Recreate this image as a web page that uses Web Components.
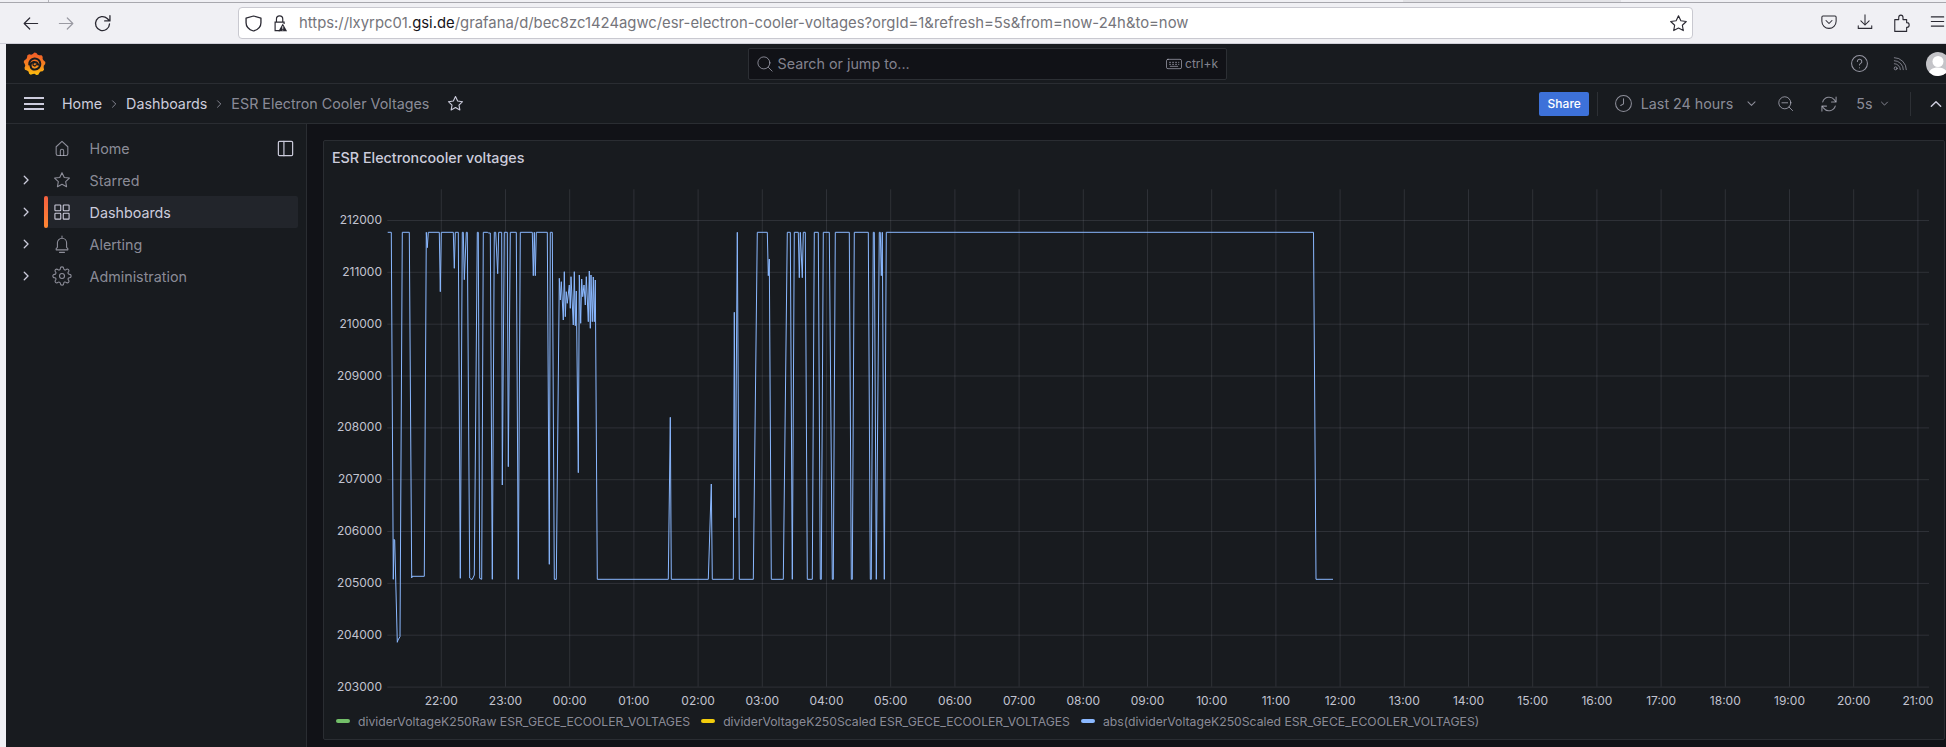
<!DOCTYPE html>
<html>
<head>
<meta charset="utf-8">
<title>ESR Electron Cooler Voltages</title>
<style>
  html, body { margin: 0; height: 100%; overflow: hidden; background: #f0f0f4; }
  body { display: flex; flex-direction: column; width: 1946px; height: 747px; font-family: "Inter", "Liberation Sans", sans-serif; }
</style>
</head>
<body>
<ff-toolbar url-host="lxyrpc01.gsi.de" url-pre="https://" url-post="/grafana/d/bec8zc1424agwc/esr-electron-cooler-voltages?orgId=1&amp;refresh=5s&amp;from=now-24h&amp;to=now"></ff-toolbar>
<gf-app>
  <gf-topbar></gf-topbar>
  <gf-crumbs title-text="ESR Electron Cooler Voltages"></gf-crumbs>
  <gf-body>
    <gf-sidebar slot="side">
      <gf-nav-item icon="home" dock>Home</gf-nav-item>
      <gf-nav-item icon="star" expandable>Starred</gf-nav-item>
      <gf-nav-item icon="apps" expandable active>Dashboards</gf-nav-item>
      <gf-nav-item icon="bell" expandable>Alerting</gf-nav-item>
      <gf-nav-item icon="cog" expandable>Administration</gf-nav-item>
    </gf-sidebar>
    <gf-panel title-text="ESR Electroncooler voltages">
      <gf-chart></gf-chart>
      <gf-legend slot="legend">
        <gf-legend-item color="#73bf69">dividerVoltageK250Raw ESR_GECE_ECOOLER_VOLTAGES</gf-legend-item>
        <gf-legend-item color="#f2cc0c">dividerVoltageK250Scaled ESR_GECE_ECOOLER_VOLTAGES</gf-legend-item>
        <gf-legend-item color="#8ab8ff">abs(dividerVoltageK250Scaled ESR_GECE_ECOOLER_VOLTAGES)</gf-legend-item>
      </gf-legend>
    </gf-panel>
  </gf-body>
</gf-app>

<script>
"use strict";

(() => {
  const ICONS = {
    back: `<path d="M21 12H4M11 5l-7 7 7 7"/>`,
    forward: `<path d="M3 12h17M13 5l7 7-7 7"/>`,
    reload: `<path d="M20 12.500a8 8 0 1 1-2.600-6.300L20 8.800M20.500 3v6h-6"/>`,
    shield: `<path d="M12 2.500l8.500 2.700V11c0 5.200-3.500 8.800-8.500 10.500C7 19.800 3.500 16.200 3.500 11V5.200z"/>`,
    pocket: `<path d="M4 4h16a1.500 1.500 0 0 1 1.500 1.500V11a9.500 9.500 0 0 1-19 0V5.500A1.500 1.500 0 0 1 4 4z"/><path d="M8 10l4 4 4-4"/>`,
    download: `<path d="M12 2.500V16M6.500 10.500L12 16l5.500-5.500M3 17v3.500h18V17"/>`,
    puzzle: `<path d="M4 8h5V5.500a2.700 2.700 0 0 1 5.400 0V8H19v3.500h.5a2.700 2.700 0 0 1 0 5.400H19V21.500H4z" transform="translate(-.5 -.5)"/>`,
    menu: `<path d="M2 5.500h20M2 12h20M2 18.500h20"/>`,
    home: `<path d="M5 10.500L12 4l7 6.500V19a2 2 0 0 1-2 2H7a2 2 0 0 1-2-2z"/><path d="M10 21v-5.500a2 2 0 0 1 4 0V21"/>`,
    star: `<path d="M12 3.200l2.700 5.700 6.200.8-4.500 4.300 1.100 6.100-5.500-3-5.500 3 1.100-6.100-4.500-4.300 6.200-.8z"/>`,
    apps: `<rect x="3.500" y="3.500" width="7" height="7" rx=".8"/><rect x="13.500" y="3.500" width="7" height="7" rx=".8"/><rect x="3.500" y="13.500" width="7" height="7" rx=".8"/><rect x="13.500" y="13.500" width="7" height="7" rx=".8"/>`,
    bell: `<path d="M12 2.500v2M6.500 16v-5.500a5.500 5.500 0 0 1 11 0V16l1.500 1.500v1.500H5v-1.500z"/><path d="M9 22h6"/>`,
    cog: `<circle cx="12" cy="12" r="3"/><path d="M19.400 15a1.650 1.650 0 0 0 .33 1.820l.06.06a2 2 0 0 1 0 2.830 2 2 0 0 1-2.830 0l-.06-.06a1.650 1.650 0 0 0-1.820-.33 1.650 1.650 0 0 0-1 1.510V21a2 2 0 0 1-2 2 2 2 0 0 1-2-2v-.09A1.650 1.650 0 0 0 9 19.400a1.650 1.650 0 0 0-1.820.33l-.06.06a2 2 0 0 1-2.830 0 2 2 0 0 1 0-2.830l.06-.06a1.650 1.650 0 0 0 .33-1.820 1.650 1.650 0 0 0-1.510-1H3a2 2 0 0 1-2-2 2 2 0 0 1 2-2h.09A1.650 1.650 0 0 0 4.600 9a1.650 1.650 0 0 0-.33-1.820l-.06-.06a2 2 0 0 1 0-2.830 2 2 0 0 1 2.830 0l.06.06a1.650 1.650 0 0 0 1.820.33H9a1.650 1.650 0 0 0 1-1.510V3a2 2 0 0 1 2-2 2 2 0 0 1 2 2v.09a1.650 1.650 0 0 0 1 1.510 1.650 1.650 0 0 0 1.820-.33l.06-.06a2 2 0 0 1 2.830 0 2 2 0 0 1 0 2.830l-.06.06a1.650 1.650 0 0 0-.33 1.820V9a1.650 1.650 0 0 0 1.510 1H21a2 2 0 0 1 2 2 2 2 0 0 1-2 2h-.09a1.650 1.650 0 0 0-1.510 1z"/>`,
    dock: `<rect x="3" y="3" width="18" height="18" rx="1.500"/><path d="M10 3v18"/>`,
    search: `<circle cx="10.500" cy="10.500" r="8"/><path d="M16.500 16.500l5 5"/>`,
    keyboard: `<rect x="2" y="5" width="20" height="14" rx="2"/><path d="M6 9.500h1.500M10 9.500h1.500M14 9.500h1.500M18 9.500h.5M6 12.500h1.500M10 12.500h1.500M14 12.500h1.500M18 12.500h.5M7 15.500h10"/>`,
    help: `<circle cx="12" cy="12" r="10"/><path d="M9.300 9.500a2.800 2.800 0 1 1 4.200 2.400c-1 .6-1.500 1.100-1.500 2.100M12 17.300v.2"/>`,
    rss: `<circle cx="5.500" cy="18.500" r="2.200"/><path d="M3.500 11.500a9 9 0 0 1 9 9M3.500 7a13.500 13.500 0 0 1 13.500 13.500M3.500 2.500a18 18 0 0 1 18 18"/>`,
    clock: `<circle cx="12" cy="12" r="10"/><path d="M12 6v6.500l-3.500 2"/>`,
    zoomout: `<circle cx="11" cy="11" r="8.500"/><path d="M7 11h8M17 17l5 5"/>`,
    sync: `<path d="M4.500 9.500A8 8 0 0 1 18.500 7L20 9M19.500 14.500A8 8 0 0 1 5.500 17L4 15"/><path d="M20.500 3.500V9.500h-5.500M3.500 20.500V14.500h5.500"/>`,
    right: `<path d="M9 5.500l6.500 6.500L9 18.500"/>`,
    down: `<path d="M5.500 9l6.500 6.500L18.500 9"/>`,
    up: `<path d="M5 15.500L12 8.500l7 7"/>`
  };

  const icon = (name, w, sw = 1.7, h = w) =>
    `<svg width="${w}" height="${h}" viewBox="0 0 24 24" fill="none" stroke="currentColor" stroke-width="${sw}" stroke-linecap="round" stroke-linejoin="round" preserveAspectRatio="none" style="display:block;flex:none">${ICONS[name]}</svg>`;

  customElements.define("ff-toolbar", class extends HTMLElement {
    connectedCallback() {
      const pre = this.getAttribute("url-pre"), host = this.getAttribute("url-host"), post = this.getAttribute("url-post");
      this.attachShadow({mode: "open"}).innerHTML = `
      <style>
      :host {
        display: block;
        flex: none;
        height: 44px;
        background: #f0f0f4;
        color: #2b2a33;
        font-family: "Inter", "Liberation Sans", sans-serif;
      }
      #tabs {
        height: 2px;
        border-bottom: 1px solid #a8a8ae;
        background: linear-gradient(#b4b4ba, #b4b4ba) 48px 0 / 1px 100% no-repeat,
                    linear-gradient(#e2e2e6, #e2e2e6) 1403px 0 / 218px 100% no-repeat;
      }
      #row { display: flex; align-items: center; height: 40px; padding-left: 12px; border-bottom: 1px solid #cfcfd8; box-sizing: content-box; }
      .btn { width: 36px; display: flex; justify-content: center; flex: none; }
      .dim { color: #9a9aa2; }
      #url {
        margin-left: 118px;
        width: 1455px;
        height: 32px;
        flex: none;
        box-sizing: border-box;
        display: flex;
        align-items: center;
        padding: 0 3.500px 0 3.500px;
        background: #fff;
        border: 1px solid #c9c9d0;
        border-radius: 4px;
      }
      #lock { margin-left: 9.500px; width: 15px; height: 18px; flex: none; }
      #text { margin-left: 11px; font-size: 14.850px; color: #75757b; white-space: nowrap; flex: 1; }
      #text b { font-weight: 400; color: #15141a; }
      #right { margin-left: 118px; display: flex; }
      </style>
      <div id="tabs"></div>
      <div id="row">
        <span class="btn">${icon("back", 19, 1.500)}</span>
        <span class="btn dim">${icon("forward", 19, 1.500)}</span>
        <span class="btn">${icon("reload", 21, 1.500)}</span>
        <div id="url">
          ${icon("shield", 21, 1.500, 19)}
          <svg id="lock" viewBox="0 0 15 20" fill="none" stroke="#2b2a33" stroke-width="1.300">
            <path d="M3 9V5.500a3.500 3.500 0 0 1 7 0V9"/>
            <path d="M7 18.500H1.500V9h10v2"/>
            <path d="M10 10.500l4.800 8.800H5.200z" fill="#2b2a33" stroke="none"/>
            <path d="M10 13.500v3M10 17.500v.8" stroke="#fff" stroke-width="1"/>
          </svg>
          <span id="text">${pre}${host.replace("gsi.de", "<b>gsi.de</b>")}${post.replace(/&/g, "&amp;")}</span>
          ${icon("star", 21, 1.300)}
        </div>
        <div id="right">
          <span class="btn">${icon("pocket", 18, 1.400)}</span>
          <span class="btn">${icon("download", 18, 1.400)}</span>
          <span class="btn">${icon("puzzle", 19, 1.400, 21)}</span>
          <span class="btn">${icon("menu", 15, 1.500, 17)}</span>
        </div>
      </div>`;
    }
  });

  customElements.define("gf-app", class extends HTMLElement {
    constructor() {
      super();
      this.attachShadow({mode: "open"}).innerHTML = `
      <style>
      :host {
        display: flex;
        flex-direction: column;
        flex: none;
        margin-left: 6px;
        width: 1946px;
        height: 703px;
        background: #111217;
        color: #ccccdc;
        font-family: "Inter", "Liberation Sans", sans-serif;
        font-size: 14.300px;
      }
      </style>
      <slot></slot>`;
    }
  });

  customElements.define("gf-logo", class extends HTMLElement {
    constructor() {
      super();
      // bumpy gear outline, nine teeth around the swirl
      let d = "";
      for (let i = 0; i < 36; i++) {
        const a = (i / 36) * Math.PI * 2 - Math.PI / 2;
        const r = [12, 11.6, 10.2, 10.6][i % 4];
        d += (i ? "L" : "M") + (12 + r * 0.96 * Math.cos(a)).toFixed(2) + " " + (12 + r * Math.sin(a)).toFixed(2);
      }
      this.attachShadow({mode: "open"}).innerHTML = `
      <style>:host { display: block; width: 23px; height: 24px; flex: none; }</style>
      <svg width="23" height="24" viewBox="0 0 24 24" style="display:block">
        <defs><linearGradient id="g" x1="0" y1="0" x2="0" y2="1">
          <stop offset="0" stop-color="#f15a29"/><stop offset=".55" stop-color="#f58220"/><stop offset="1" stop-color="#fcc10d"/>
        </linearGradient></defs>
        <path d="${d}Z" fill="url(#g)"/>
        <path d="M6.500 12.500a5.800 5.800 0 1 1 6 5.300 4 4 0 1 1 3.300-5" fill="none" stroke="#181b1f" stroke-width="2.100" stroke-linecap="round"/>
        <path d="M12.500 10.500a1.800 1.800 0 1 0 1.400 2.200" fill="none" stroke="#181b1f" stroke-width="1.300" stroke-linecap="round"/>
      </svg>`;
    }
  });

  customElements.define("gf-topbar", class extends HTMLElement {
    constructor() {
      super();
      this.attachShadow({mode: "open"}).innerHTML = `
      <style>
      :host {
        display: grid;
        grid-template-columns: 742px 479px 1fr;
        align-items: center;
        flex: none;
        height: 39px;
        box-sizing: content-box;
        background: #181b1f;
        border-bottom: 1px solid #2a2d32;
      }
      #logo { padding-left: 17px; }
      #search {
        height: 32px;
        box-sizing: border-box;
        display: flex;
        align-items: center;
        padding: 0 8px 0 6.500px;
        background: #111217;
        border: 1px solid #2c2f34;
        border-radius: 2px;
        color: rgba(204,204,220,.62);
      }
      #search span { margin-left: 4px; flex: 1; }
      #search i { font-style: normal; font-size: 12px; margin-left: 2.500px; }
      #right { display: flex; align-items: center; justify-content: flex-end; padding-right: 2px; color: rgba(204,204,220,.7); }
      #avatar { margin-left: 18px; width: 24px; height: 24px; border-radius: 50%; overflow: hidden; background: #c4c4c8; }
      #rss { margin-left: 23px; color: rgba(204,204,220,.55); }
      </style>
      <div id="logo"><gf-logo></gf-logo></div>
      <div id="search">
        ${icon("search", 18, 1.300)}
        <span>Search or jump to...</span>
        ${icon("keyboard", 18, 1.300, 16)}
        <i>ctrl+k</i>
      </div>
      <div id="right">
        ${icon("help", 19, 1.300)}
        <div id="rss">${icon("rss", 16, 1.500)}</div>
        <div id="avatar">
          <svg width="24" height="24" viewBox="0 0 24 24" style="display:block"><circle cx="12" cy="9.500" r="5.500" fill="#fff"/><path d="M2 26c0-8 4-10.500 10-10.500S22 18 22 26z" fill="#fff"/></svg>
        </div>
      </div>`;
    }
  });

  customElements.define("gf-crumbs", class extends HTMLElement {
    connectedCallback() {
      this.attachShadow({mode: "open"}).innerHTML = `
      <style>
      :host {
        display: flex;
        align-items: center;
        flex: none;
        height: 39px;
        box-sizing: content-box;
        background: #181b1f;
        border-bottom: 1px solid #2a2d32;
        padding: 0 8px 0 18px;
        color: #ccccdc;
      }
      #burger { width: 20px; height: 13px; border-top: 2px solid #ccccdc; border-bottom: 2px solid #ccccdc; position: relative; box-sizing: border-box; margin-right: 18px; flex: none; }
      #burger::after { content: ""; position: absolute; left: 0; right: 0; top: 3.500px; height: 2px; background: #ccccdc; }
      .sep { margin: 0 6px 0 6px; color: rgba(204,204,220,.65); }
      .last { color: rgba(204,204,220,.65); }
      #fav { margin-left: 17px; }
      #share {
        margin-left: auto;
        width: 50px;
        height: 24px;
        display: flex;
        align-items: center;
        justify-content: center;
        background: #3d71d9;
        color: #fff;
        font-size: 12px;
        font-weight: 500;
        border-radius: 2px;
      }
      .div { width: 1px; height: 24px; background: #2d3035; flex: none; }
      .sec { color: rgba(204,204,220,.65); display: flex; align-items: center; }
      </style>
      <div id="burger"></div>
      <span>Home</span>
      <span class="sep">${icon("right", 12, 1.800)}</span>
      <span>Dashboards</span>
      <span class="sep">${icon("right", 12, 1.800)}</span>
      <span class="last">${this.getAttribute("title-text")}</span>
      <span id="fav">${icon("star", 19, 1.400)}</span>
      <div id="share">Share</div>
      <div class="div" style="margin-left:8px"></div>
      <div class="sec" style="margin-left:16px">${icon("clock", 19, 1.300)}<span style="margin-left:7.500px">Last 24 hours</span></div>
      <div class="sec" style="margin-left:12px">${icon("down", 13, 1.900)}</div>
      <div class="sec" style="margin-left:19px">${icon("zoomout", 17, 1.400)}</div>
      <div class="sec" style="margin-left:25px">${icon("sync", 20, 1.300)}</div>
      <div class="sec" style="margin-left:17px"><span>5s</span></div>
      <div class="sec" style="margin-left:6.500px">${icon("down", 11, 2)}</div>
      <div class="div" style="margin-left:20px"></div>
      <div class="sec" style="margin-left:17px;color:#ccccdc">${icon("up", 16, 2.200)}</div>`;
    }
  });

  customElements.define("gf-body", class extends HTMLElement {
    constructor() {
      super();
      this.attachShadow({mode: "open"}).innerHTML = `
      <style>
      :host { display: flex; flex: 1; min-height: 0; }
      main { flex: 1; padding: 16px 0 0 16px; min-width: 0; }
      </style>
      <slot name="side"></slot>
      <main><slot></slot></main>`;
    }
  });

  customElements.define("gf-sidebar", class extends HTMLElement {
    constructor() {
      super();
      this.attachShadow({mode: "open"}).innerHTML = `
      <style>
      :host {
        display: flex;
        flex-direction: column;
        flex: none;
        width: 300px;
        padding-top: 8px;
        box-sizing: content-box;
        background: #181b1f;
        border-right: 1px solid #2a2d32;
      }
      </style>
      <slot></slot>`;
    }
  });

  customElements.define("gf-nav-item", class extends HTMLElement {
    connectedCallback() {
      const active = this.hasAttribute("active");
      this.attachShadow({mode: "open"}).innerHTML = `
      <style>
      :host { display: flex; align-items: center; height: 32px; flex: none; }
      #exp { width: 38px; padding-left: 13px; box-sizing: border-box; flex: none; color: #ccccdc; }
      #item {
        width: 254px;
        height: 32px;
        display: flex;
        align-items: center;
        position: relative;
        box-sizing: border-box;
        padding-left: 8px;
        border-radius: 2px;
        color: ${active ? "#ccccdc" : "rgba(204,204,220,.65)"};
        background: ${active ? "#22252b" : "transparent"};
      }
      #bar { position: absolute; left: 0; top: 0; bottom: 0; width: 4px; border-radius: 2px; background: linear-gradient(#f55f3e, #ff8833); }
      #label { margin-left: 17.600px; }
      #dock { margin-left: auto; margin-right: 3px; color: #ccccdc; }
      </style>
      <div id="exp">${this.hasAttribute("expandable") ? icon("right", 14, 2.200) : ""}</div>
      <div id="item">
        ${active ? `<div id="bar"></div>` : ""}
        ${icon(this.getAttribute("icon"), 20, 1.300)}
        <span id="label"><slot></slot></span>
        ${this.hasAttribute("dock") ? `<div id="dock">${icon("dock", 19, 1.500)}</div>` : ""}
      </div>`;
    }
  });

  customElements.define("gf-panel", class extends HTMLElement {
    connectedCallback() {
      this.attachShadow({mode: "open"}).innerHTML = `
      <style>
      :host {
        display: flex;
        flex-direction: column;
        width: 1622px;
        height: 600px;
        box-sizing: border-box;
        background: #181b1f;
        border: 1px solid #2a2d32;
        border-radius: 2px;
      }
      #title { height: 36px; flex: none; display: flex; align-items: center; padding: 0 0 4px 8px; font-weight: 500; font-size: 14.300px; color: #ccccdc; box-sizing: border-box; }
      </style>
      <div id="title">${this.getAttribute("title-text")}</div>
      <slot></slot>
      <slot name="legend"></slot>`;
    }
  });

  // series traced from the reference, page pixels; T and B are the two plateaus
  const T = 232.3, B = 579.3;
  const SERIES = [
    [387.7,T],[391.3,T],[393.3,B],[394,539.3],[394.7,540],[397.3,642.3],[398,640],[400,636.7],[402.3,T],[409.3,T],[411.7,578],[412,576.3],[424.3,576.3],
    [426.3,T],[427.3,247.7],[428.3,T],[439.3,T],[440.3,291.7],[441.3,T],[453.3,T],[454.3,268.3],[455.3,T],[458.3,T],[460.3,578.3],[462.3,T],[463.3,T],
    [464.3,279.7],[466.3,T],[467.3,T],[469.7,578],[471,B],[472.3,B],[474.3,575],[477.3,T],[478.3,T],[479.7,578.3],[481.7,B],[483.3,T],[487.7,T],[488.3,233],
    [490.3,233],[492.3,B],[494.3,T],[495.7,T],[497.7,273.7],[498.7,T],[501.7,T],[502.3,485],[504.3,T],[507.3,T],[508.3,466.7],[510.3,T],[516.3,T],[518.3,B],
    [520.3,T],[532.3,T],[533.3,275.7],[534.3,T],[535.3,275.7],[536.3,T],[547.3,T],[549.3,564.3],[550.3,T],[552.3,T],[554.3,B],[556.3,B]
  ];
  // noisy stretch around 00:00, from the 3x crop (crop coords)
  [[13,160],[16,225],[19,170],[25,285],[28,140],[31,275],[34,200],[37,235],[43,180],[46,250],[48,155],[55,300],[58,140],[61,302],[64,198],[70,743],
   [73,150],[77,295],[80,162],[83,215],[87,180],[91,240],[94,155],[100,290],[103,138],[106,310],[108,150],[112,290],[115,156],[118,290],[121,165]]
    .forEach(([x, y]) => SERIES.push([555 + x / 3, 225 + y / 3]));
  SERIES.push(
    [597.3,B],[668.3,B],[670.3,417.3],[671.3,B],[708.3,B],[711.3,484],[712.3,B],[733.3,B],[734.3,312.3],[735.3,517.7],[737.3,T],[739.3,B],[753.3,B],[757.3,T],
    [767.3,T],[768.3,275.7],[769.3,259],[771.3,B],[783.3,B],[787.3,T],[790.3,T],[792.3,B],[794.3,T],[798.3,T],[799.3,277.7],[800.3,T],[802.3,277.7],[803.3,T],
    [805.3,T],[807.3,B],[812.3,B],[814.3,T],[818.3,T],[820.3,B],[821.3,B],[823.3,T],[829.3,T],[832.3,B],[833.3,B],[835.3,T],[849.3,T],[851.3,B],[852.3,B],
    [854.3,T],[868.3,T],[870.3,B],[871.3,B],[873.3,T],[874.3,T],[876.3,B],[879.3,T],[880.3,T],[881.3,275.7],[882.3,T],[884.3,B],[886.3,T],[1313.5,T],[1316,B],[1333,B]
  );

  customElements.define("gf-chart", class extends HTMLElement {
    constructor() {
      super();
      const rows = [212000, 211000, 210000, 209000, 208000, 207000, 206000, 205000, 204000, 203000];
      const y = v => 220.5 + (212000 - v) * 0.05184;
      const hours = ["22:00","23:00","00:00","01:00","02:00","03:00","04:00","05:00","06:00","07:00","08:00","09:00","10:00","11:00","12:00","13:00","14:00","15:00","16:00","17:00","18:00","19:00","20:00","21:00"];
      const x = i => 441.3 + i * 64.2;
      const grid = [
        ...rows.map(v => `<path d="M387.3 ${y(v).toFixed(1)}H1929"/>`),
        ...hours.map((_, i) => `<path d="M${x(i).toFixed(1)} 189.3V686.5"/>`)
      ].join("");
      const labels = [
        ...rows.map(v => `<text x="382" y="${(y(v) + 3.500).toFixed(1)}" text-anchor="end">${v}</text>`),
        ...hours.map((h, i) => `<text x="${x(i).toFixed(1)}" y="705" text-anchor="middle">${h}</text>`)
      ].join("");
      this.attachShadow({mode: "open"}).innerHTML = `
      <style>
      :host { display: block; height: 530px; flex: none; }
      svg { display: block; }
      text { font: 12px "Inter", "Liberation Sans", sans-serif; fill: #c2c3d0; }
      </style>
      <svg width="1620" height="530" viewBox="324 177 1620 530">
        <g stroke="#ccccdc" stroke-opacity=".13" stroke-width="1" fill="none">${grid}</g>
        <path d="M${SERIES.map(p => p[0].toFixed(1) + " " + p[1].toFixed(1)).join("L")}" fill="none" stroke="#8ab8ff" stroke-width="1" stroke-linejoin="round"/>
        ${labels}
      </svg>`;
    }
  });

  customElements.define("gf-legend", class extends HTMLElement {
    constructor() {
      super();
      this.attachShadow({mode: "open"}).innerHTML = `
      <style>
      :host { display: flex; align-items: center; gap: 11px; height: 30px; padding-left: 12px; padding-bottom: 2px; box-sizing: border-box; }
      </style>
      <slot></slot>`;
    }
  });

  customElements.define("gf-legend-item", class extends HTMLElement {
    connectedCallback() {
      this.attachShadow({mode: "open"}).innerHTML = `
      <style>
      :host { display: flex; align-items: center; gap: 8px; font-size: 12.200px; color: rgba(204,204,220,.65); white-space: nowrap; }
      i { width: 14px; height: 4px; border-radius: 2px; background: ${this.getAttribute("color")}; }
      </style>
      <i></i><span><slot></slot></span>`;
    }
  });
})();
</script>
</body>
</html>
